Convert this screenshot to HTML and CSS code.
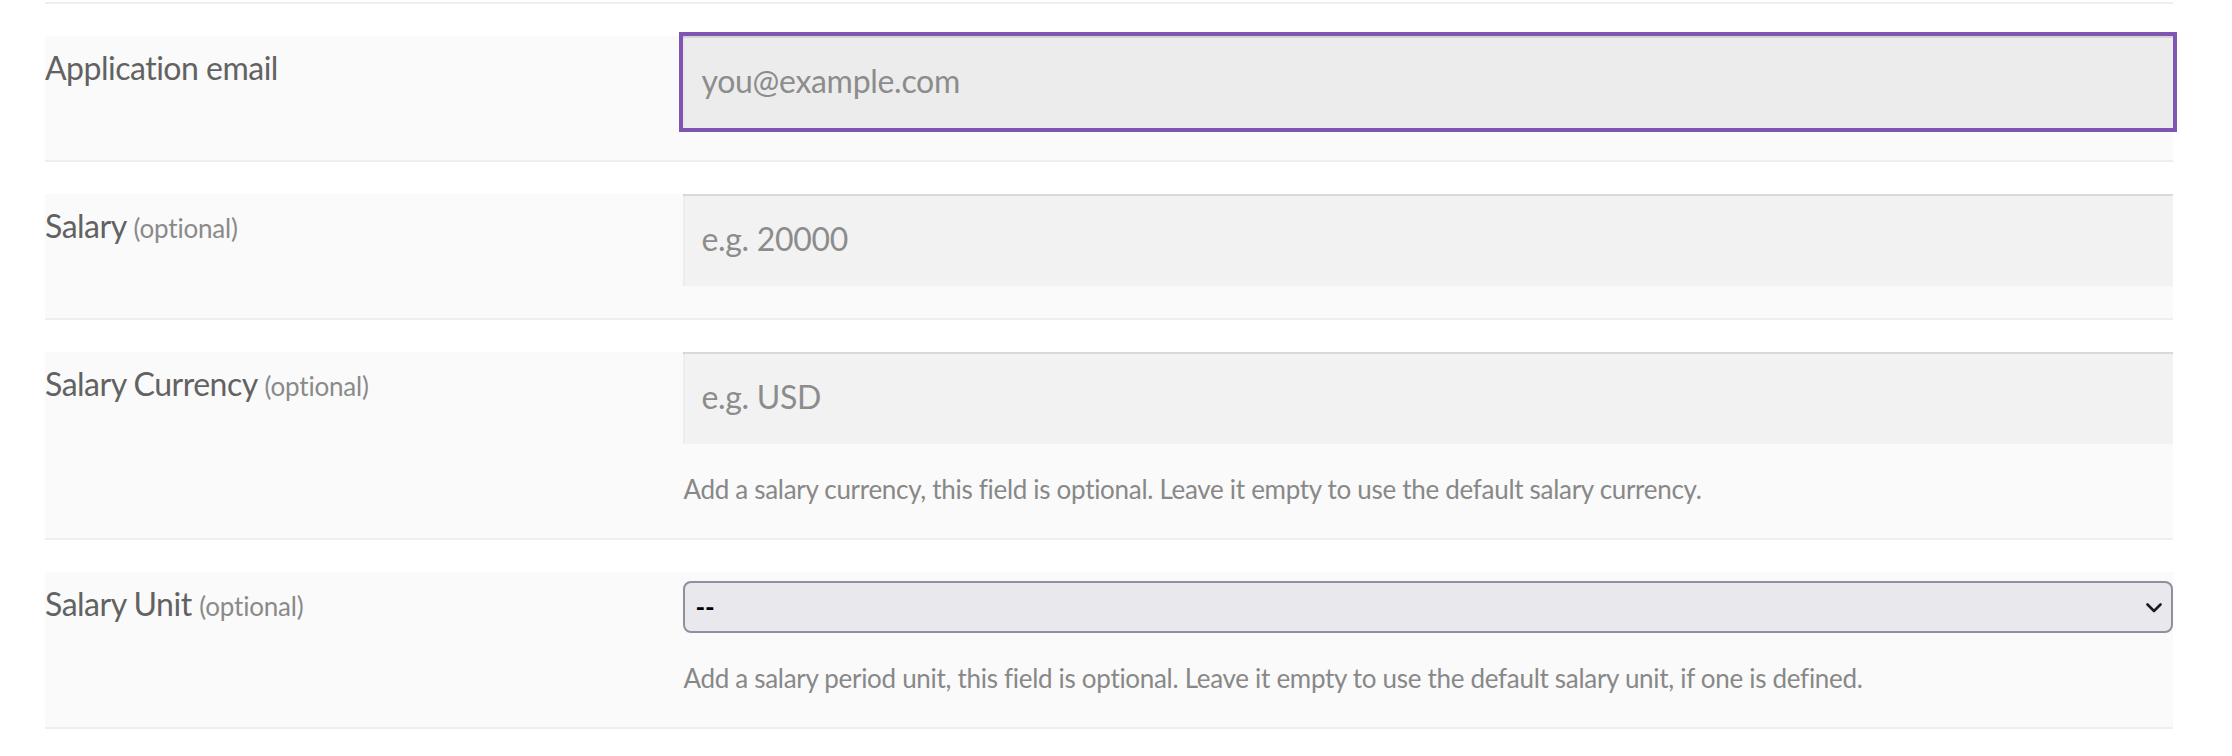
FILE: index.html
```html
<!DOCTYPE html>
<html lang="en">
<head>
<meta charset="utf-8">
<title>Job listing fields</title>
<link rel="stylesheet" href="styles.css">
</head>
<body>
<div class="form">
  <div class="prev-row"></div>

  <div class="field-row">
    <label class="field-label" for="application">Application email</label>
    <div class="field-control">
      <input class="text-input is-focused" type="text" id="application" placeholder="you@example.com">
    </div>
  </div>

  <div class="field-row">
    <label class="field-label" for="salary">Salary <small class="optional">(optional)</small></label>
    <div class="field-control">
      <input class="text-input" type="text" id="salary" placeholder="e.g. 20000">
    </div>
  </div>

  <div class="field-row">
    <label class="field-label" for="currency">Salary Currency <small class="optional">(optional)</small></label>
    <div class="field-control">
      <input class="text-input" type="text" id="currency" placeholder="e.g. USD">
      <p class="help">Add a salary currency, this field is optional. Leave it empty to use the default salary currency.</p>
    </div>
  </div>

  <div class="field-row">
    <label class="field-label" for="unit">Salary Unit <small class="optional">(optional)</small></label>
    <div class="field-control">
      <div class="select-wrap">
        <select class="select" id="unit">
          <option>--</option>
        </select>
        <svg class="chevron" width="16" height="10" viewBox="0 0 16 10" aria-hidden="true"><path d="M1.5 1.5 L8 8 L14.5 1.5" fill="none" stroke="#1c1b22" stroke-width="2.6" stroke-linecap="round" stroke-linejoin="round"/></svg>
      </div>
      <p class="help">Add a salary period unit, this field is optional. Leave it empty to use the default salary unit, if one is defined.</p>
    </div>
  </div>
</div>
</body>
</html>
```

FILE: styles.css
```css
html, body {
  margin: 0;
  padding: 0;
  background: #ffffff;
}

body {
  padding-top: 2px;
  font-family: Lato, "Open Sans", "Liberation Sans", sans-serif;
}

.form {
  margin: 0 59px 0 45px;
}

.prev-row {
  border-bottom: 2px solid #eeeeee;
}

.field-row {
  display: grid;
  grid-template-columns: 30% 70%;
  margin-top: 32px;
  padding-bottom: 32px;
  background: #fafafa;
  border-bottom: 2px solid #eeeeee;
}

.field-label {
  display: block;
  padding-top: 8px;
  font-size: 32px;
  line-height: 48px;
  letter-spacing: -0.5px;
  color: #626262;
}

.optional {
  font-size: 26px;
  letter-spacing: -0.2px;
  color: #8a8a8a;
}

.field-control {
  min-width: 0;
}

.text-input {
  display: block;
  box-sizing: border-box;
  width: 100%;
  height: 92px;
  margin: 0;
  padding: 0 18px 4px;
  border: none;
  border-radius: 0;
  background: #f2f2f2;
  box-shadow: inset 0 2px 0 rgba(0, 0, 0, 0.1), inset 2px 0 0 rgba(0, 0, 0, 0.02);
  font-family: inherit;
  font-size: 32px;
  letter-spacing: -0.3px;
  color: #555555;
}

.text-input::placeholder {
  color: #8c8c8c;
  opacity: 1;
}

.text-input.is-focused {
  background: #ececec;
  outline: 4px solid #7f54b3;
  outline-offset: 0;
}

.select-wrap {
  position: relative;
  margin: 9px 0 5px;
}

.select {
  display: block;
  box-sizing: border-box;
  width: 100%;
  height: 52px;
  margin: 0;
  padding: 0 10px;
  appearance: none;
  -webkit-appearance: none;
  border: 2px solid #8f8f9d;
  border-radius: 8px;
  background: #e9e9ed;
  font-family: inherit;
  font-size: 26px;
  font-weight: 700;
  color: #000000;
}

.chevron {
  position: absolute;
  right: 11px;
  top: 22px;
}

.help {
  margin: 26px 0 -3px;
  font-size: 26px;
  line-height: 39px;
  letter-spacing: -0.3px;
  color: #888888;
}
```
